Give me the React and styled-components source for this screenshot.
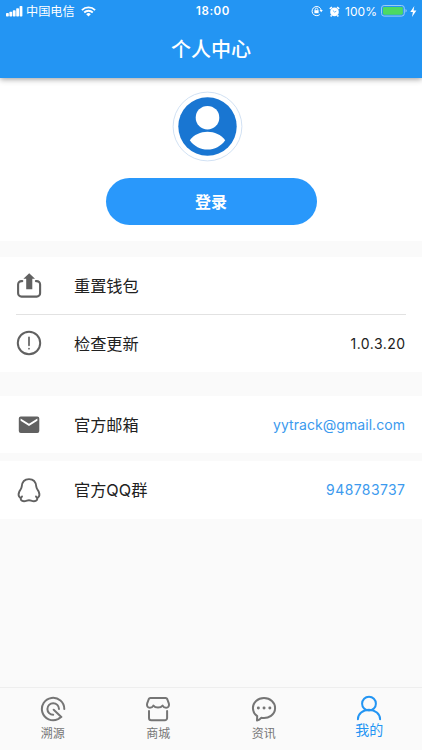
import React from 'react';
import styled, { createGlobalStyle } from 'styled-components';

const GlobalStyle = createGlobalStyle`
    * {
        box-sizing: border-box;
    }

    body {
        margin: 0;
        background: #fafafa;
        font-family: Inter, "Noto Sans CJK SC", sans-serif;
    }
`;

const Root = styled.div`
    display: flex;
    flex-direction: column;
    height: 750px;
    overflow: hidden;
    background: #fafafa;
`;

const Header = styled.header`
    position: relative;
    height: 78px;
    flex: none;
    color: #fff;
    background: #2395f3;
    box-shadow: 0 1px 6px rgba(0, 0, 0, .42);
`;

const StatusBar = styled.div`
    display: grid;
    grid-template-columns: 1fr auto 1fr;
    align-items: center;
    height: 22px;
    padding: 0 5px 0 6px;
    font-size: 12px;
`;

const StatusGroup = styled.div`
    display: flex;
    align-items: center;
    justify-content: ${props => props.$end ? 'flex-end' : 'flex-start'};

    svg {
        display: block;
        flex: none;
    }
`;

const Spacer = styled.span`
    width: ${props => props.$width}px;
    flex: none;
`;

const Carrier = styled.span`
    margin: 0 6px 0 3px;
    padding-top: 1px;
    font-size: 12.2px;
    line-height: 18px;
`;

const Clock = styled.span`
    padding-left: 3px;
    font-size: 11.5px;
    font-weight: 600;
    letter-spacing: .55px;
`;

const Percent = styled.span`
    margin: 0 4px 0 5px;
    letter-spacing: .05px;
`;

const Title = styled.h1`
    margin: 0;
    padding-top: 13px;
    font-size: 20px;
    font-weight: 500;
    line-height: 30px;
    text-align: center;
`;

const Profile = styled.section`
    display: flex;
    flex-direction: column;
    align-items: center;
    height: 163px;
    flex: none;
    padding-top: 13px;
    background: #fff;
`;

const Avatar = styled.svg`
    display: block;
    width: 71px;
    height: 71px;
    margin-right: 8px;
`;

const LoginButton = styled.button`
    width: 211px;
    height: 47px;
    margin-top: 16.4px;
    padding: 1px 0 0;
    border: 0;
    border-radius: 24px;
    color: #fff;
    background: #2998fb;
    font-family: inherit;
    font-size: 16px;
    font-weight: 700;
    line-height: 46px;
`;

const Group = styled.section`
    flex: none;
    margin-top: ${props => props.$gap}px;
    padding: 0 17px 0 16px;
    background: #fff;
`;

const Row = styled.div`
    display: flex;
    align-items: center;
    height: ${props => props.$height || 57}px;
    padding-bottom: 1px;
    color: #212121;
    font-size: 16.2px;

    svg {
        display: block;
        flex: none;
        width: 26px;
        height: 26px;
        margin-right: 32px;
        color: #616161;
    }
`;

const Label = styled.span`
    padding-bottom: 1px;
`;

const Divider = styled.div`
    height: 1px;
    margin-right: -1px;
    background: #e2e2e2;
`;

const Value = styled.span`
    margin-left: auto;
    margin-right: ${props => -props.$spacing}px;
    color: ${props => props.$link ? '#3b9aee' : '#212121'};
    font-size: 14px;
    letter-spacing: ${props => props.$spacing}px;
`;

const TabBar = styled.nav`
    display: grid;
    grid-template-columns: repeat(4, 1fr);
    height: 63px;
    flex: none;
    margin-top: auto;
    border-top: 1px solid #eee;
    background: #fafafa;
`;

const Tab = styled.div`
    display: flex;
    flex-direction: column;
    align-items: center;
    padding-top: ${props => props.$active ? 7 : 8}px;
    color: ${props => props.$active ? '#2395f3' : '#757575'};
    font-size: ${props => props.$active ? 14 : 12}px;
    line-height: 18px;

    svg {
        display: block;
        flex: none;
        width: 26px;
        height: 26px;
        margin-bottom: ${props => props.$active ? 0 : 3}px;
    }
`;

const Icon = ({ children, width = 2 }) => (
    <svg
        viewBox="-1 -1 26 26"
        fill="none"
        stroke="currentColor"
        strokeWidth={width}
        strokeLinecap="round"
        strokeLinejoin="round">
        {children}
    </svg>
);

const SignalIcon = () => (
    <svg width="17" height="11" viewBox="0 0 17 11" fill="#fff">
        <rect x="0" y="7" width="2.8" height="3.5" rx=".7" />
        <rect x="3.4" y="5.8" width="2.8" height="4.7" rx=".7" />
        <rect x="6.8" y="4.2" width="2.8" height="6.3" rx=".7" />
        <rect x="10.2" y="2.3" width="2.8" height="8.2" rx=".7" />
        <rect x="13.6" y="0" width="2.8" height="10.5" rx=".7" />
    </svg>
);

const WifiIcon = () => (
    <svg width="15" height="11" viewBox="0 0 15 11" fill="none" stroke="#fff" strokeWidth="1.8">
        <path d="M.9 4.1a9.3 9.3 0 0 1 13.2 0" />
        <path d="M3.2 6.5a6.1 6.1 0 0 1 8.6 0" />
        <path d="M7.5 10.5 5.2 8.2a3.3 3.3 0 0 1 4.6 0z" fill="#fff" stroke="none" />
    </svg>
);

const LockIcon = () => (
    <svg width="12" height="12" viewBox="0 0 12 12" fill="none" stroke="#fff">
        <path d="M8.8 9.5a4.6 4.6 0 1 1 1.4-4.3" />
        <path d="M8.5 5h3.3l-1.6 2.2z" fill="#fff" stroke="none" />
        <rect x="3.4" y="5.2" width="4.2" height="3" fill="#fff" stroke="none" />
        <path d="M4.2 5.3v-.8a1.3 1.3 0 0 1 2.6 0v.8" strokeWidth=".9" />
    </svg>
);

const AlarmIcon = () => (
    <svg width="11" height="11" viewBox="0 0 11 11">
        <circle cx="5.5" cy="5.9" r="4.3" fill="#fff" />
        <path d="M.8 2.9 2.9 1M10.2 2.9 8.1 1M2.6 9.3l-.9 1.1M8.4 9.3l.9 1.1" stroke="#fff" strokeWidth="1.6" />
        <path d="M3.8 4.4 5.6 6.1 7.3 5.2" stroke="#2395f3" strokeWidth=".7" fill="none" />
    </svg>
);

const BatteryIcon = () => (
    <svg width="26" height="12" viewBox="0 0 26 12">
        <rect x=".5" y=".5" width="22.8" height="10.6" rx="2.6" fill="none" stroke="#9acdf8" />
        <rect x="1.9" y="1.9" width="20" height="7.8" rx="1.4" fill="#4cd964" />
        <path d="M24.5 4v3.6q1.2-.5 1.2-1.8T24.5 4" fill="#9acdf8" />
    </svg>
);

const BoltIcon = () => (
    <svg width="7" height="11" viewBox="0 0 7 11" fill="#fff">
        <path d="M4.3 0 .3 6h2.6L2 11l4.4-6.4H3.6z" />
    </svg>
);

const App = () => (
    <Root>
        <GlobalStyle />

        <Header>
            <StatusBar>
                <StatusGroup>
                    <SignalIcon />
                    <Carrier>中国电信</Carrier>
                    <WifiIcon />
                </StatusGroup>
                <Clock>18:00</Clock>
                <StatusGroup $end>
                    <LockIcon />
                    <Spacer $width={6} />
                    <AlarmIcon />
                    <Percent>100%</Percent>
                    <BatteryIcon />
                    <Spacer $width={3} />
                    <BoltIcon />
                </StatusGroup>
            </StatusBar>
            <Title>个人中心</Title>
        </Header>

        <Profile>
            <Avatar viewBox="0 0 71 71">
                <circle cx="35.5" cy="35.5" r="34.4" fill="#fff" stroke="#c5d9f0" strokeWidth=".8" />
                <circle cx="35.5" cy="35.5" r="29.2" fill="#1976d2" />
                <circle cx="35.5" cy="26.7" r="11.8" fill="#fff" />
                <path d="M17.8 49.2C22 43.8 28.5 40.8 35.5 40.8S49 43.8 53.2 49.2C49 55.2 42.5 58.6 35.5 58.6S22 55.2 17.8 49.2z" fill="#fff" />
            </Avatar>
            <LoginButton>登录</LoginButton>
        </Profile>

        <Group $gap={16}>
            <Row>
                <Icon width={2.1}>
                    <path d="M5.3 8.1H4.5A3.4 3.4 0 0 0 1.1 11.5v8.7a3.4 3.4 0 0 0 3.4 3.4h15.2a3.4 3.4 0 0 0 3.4-3.4v-8.7a3.4 3.4 0 0 0-3.4-3.4h-.8" />
                    <path d="M12.2.2 18 5.8h-2.7v10.4H9.2V5.8H6.4z" fill="currentColor" stroke="none" />
                </Icon>
                <Label>重置钱包</Label>
            </Row>
            <Divider />
            <Row>
                <Icon>
                    <circle cx="12" cy="12" r="11.2" />
                    <path d="M12 6.3v8M12 17.6v.1" strokeWidth="1.7" />
                </Icon>
                <Label>检查更新</Label>
                <Value $spacing={0.45}>1.0.3.20</Value>
            </Row>
        </Group>

        <Group $gap={24}>
            <Row>
                <Icon>
                    <path d="M3.8 4.4h16.5a2 2 0 0 1 2 2v12.5a2 2 0 0 1-2 2H3.8a2 2 0 0 1-2-2V6.4a2 2 0 0 1 2-2zM3.6 6.6v2.1l8.4 5.2 8.4-5.2V6.6L12 11.8z" fill="currentColor" fillRule="evenodd" stroke="none" />
                </Icon>
                <Label>官方邮箱</Label>
                <Value $link $spacing={0.06}>yytrack@gmail.com</Value>
            </Row>
        </Group>

        <Group $gap={8}>
            <Row $height={58}>
                <Icon width={1.9}>
                    <path d="M5 18.5C4.6 19.6 3.6 20.1 2.8 19.4 1.5 18.2 1.3 16 2.2 13.9 3.1 11.9 4.4 11 4.7 8.6 5.1 3.8 7.8 1.1 12 1.1S18.9 3.8 19.3 8.6C19.6 11 20.9 11.9 21.8 13.9 22.7 16 22.5 18.2 21.2 19.4 20.4 20.1 19.4 19.6 19 18.5" />
                    <path d="M3.9 19.7C3.2 21.6 4.3 23.2 7 23.2 9 23.2 10.6 22.2 12 22.2S15 23.2 17 23.2C19.7 23.2 20.8 21.6 20.1 19.7" />
                </Icon>
                <Label>官方QQ群</Label>
                <Value $link $spacing={0.4}>948783737</Value>
            </Row>
        </Group>

        <TabBar>
            <Tab>
                <Icon>
                    <path d="M23.3 12.1A11.2 11.2 0 1 0 17 22.1l3.3-2.2-7.6-7.2" />
                    <path d="M18 12a5.8 5.8 0 1 0-5.8 5.8" />
                </Icon>
                溯源
            </Tab>
            <Tab>
                <Icon>
                    <path d="M4.3 1h15.4a1.7 1.7 0 0 1 1.5 1l1.6 4.3c.8 2.500-.5 4.500-2.700 4.500-1.600 0-2.800-.8-3.500-2.200-.9 1.100-2.400 1.900-4.600 1.900s-3.700-.8-4.600-1.900c-.7 1.400-1.900 2.200-3.500 2.200-2.200 0-3.500-2-2.700-4.500L2.800 2A1.700 1.700 0 0 1 4.300 1z" />
                    <path d="M3 14v7a2.300 2.300 0 0 0 2.300 2.300h13.500a2.300 2.300 0 0 0 2.300-2.300v-7" />
                </Icon>
                商城
            </Tab>
            <Tab>
                <Icon>
                    <path d="M12 1C5.700 1 .9 5.400.9 11c0 3.300 1.700 6.200 4.300 8.100L5 23.400c1.800-.4 3.100-1.300 4.200-2.600 7.500 1.500 13.900-3.400 13.900-9.800C23.100 5.400 18.300 1 12 1z" />
                    <path d="M6.300 11h.1M12 11h.1M17.800 11h.1" strokeWidth="2.900" />
                </Icon>
                资讯
            </Tab>
            <Tab $active>
                <Icon>
                    <circle cx="12" cy="7.700" r="6.900" />
                    <path d="M.9 23.300a11.100 9.500 0 0 1 22.200 0" />
                </Icon>
                我的
            </Tab>
        </TabBar>
    </Root>
);

export default App;
